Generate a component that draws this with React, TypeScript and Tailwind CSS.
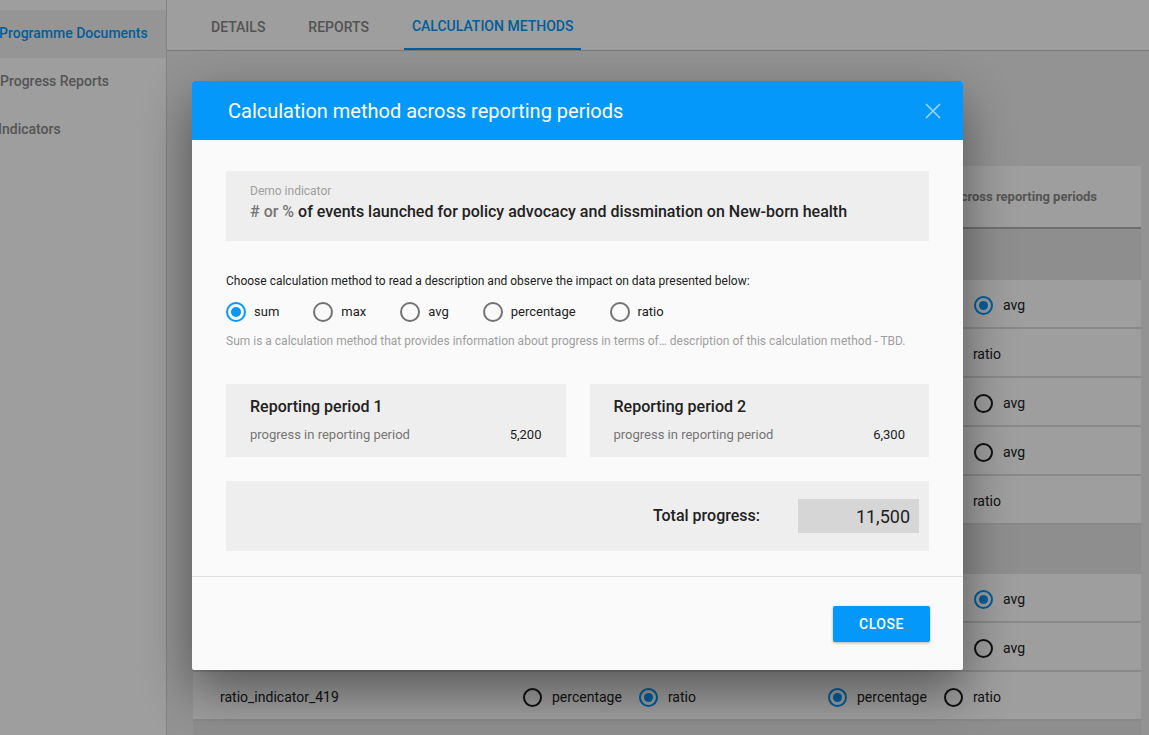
import { useState } from 'react';

const methods = ['sum', 'max', 'avg', 'percentage', 'ratio'];

type Opt = { label: string; checked?: boolean };

function TableRadio({ checked }: { checked?: boolean }) {
  return checked ? (
    <span className="w-[19px] h-[19px] rounded-full border-2 border-[#0398fa] flex items-center justify-center shrink-0">
      <span className="w-[9px] h-[9px] rounded-full bg-[#0398fa]" />
    </span>
  ) : (
    <span className="w-[19px] h-[19px] rounded-full border-[2.5px] border-[#1c1c1c] shrink-0" />
  );
}

function Options({ items }: { items: Opt[] }) {
  return (
    <div className="flex items-center">
      {items.map((o) => (
        <div key={o.label} className="flex items-center mr-[17px]">
          <TableRadio checked={o.checked} />
          <span className="ml-[10px] text-[14px] text-[#212121]">{o.label}</span>
        </div>
      ))}
    </div>
  );
}

const sma = (c?: string): Opt[] => [
  { label: 'sum', checked: c === 'sum' },
  { label: 'max', checked: c === 'max' },
  { label: 'avg', checked: c === 'avg' },
];
const pr = (c?: string): Opt[] => [
  { label: 'percentage', checked: c === 'percentage' },
  { label: 'ratio', checked: c === 'ratio' },
];

const groupA = [
  { name: 'quantity_indicator_652', a: sma('sum'), b: sma('avg') },
  { name: 'ratio_indicator_417', a: pr('percentage'), b: pr('ratio') },
  { name: 'quantity_indicator_653', a: sma('sum'), b: sma() },
  { name: 'quantity_indicator_654', a: sma('max'), b: sma() },
  { name: 'ratio_indicator_418', a: pr('ratio'), b: pr('percentage') },
];
const groupB = [
  { name: 'quantity_indicator_655', a: sma('sum'), b: sma('avg') },
  { name: 'quantity_indicator_656', a: sma('max'), b: sma() },
  { name: 'ratio_indicator_419', a: pr('ratio'), b: pr('percentage') },
];

function Row({ r, first }: { r: { name: string; a: Opt[]; b: Opt[] }; first?: boolean }) {
  return (
    <div
      className={`h-[49px] flex items-center pt-[4px] bg-white border-t-2 ${
        first ? 'border-[#e6e6e6]' : 'border-[#dedede]'
      }`}
    >
      <div className="w-[330px] pl-[27px] text-[14px] text-[#212121]">{r.name}</div>
      <div className="w-[305px]">
        <Options items={r.a} />
      </div>
      <div className="flex-1">
        <Options items={r.b} />
      </div>
    </div>
  );
}

function ModalRadio({ checked }: { checked: boolean }) {
  return checked ? (
    <span className="w-5 h-5 rounded-full border-2 border-[#0398fa] flex items-center justify-center shrink-0">
      <span className="w-[10px] h-[10px] rounded-full bg-[#0398fa]" />
    </span>
  ) : (
    <span className="w-5 h-5 rounded-full border-2 border-[#737373] shrink-0" />
  );
}

function PeriodCard({ title, value }: { title: string; value: string }) {
  return (
    <div className="flex-1 bg-[#eeeeee] pl-6 pr-6 pt-[11px] pb-[13px]">
      <div className="text-[16px] leading-6 font-medium text-[#212121]">{title}</div>
      <div className="flex justify-between items-center mt-[7px] text-[13px] leading-[18px]">
        <span className="text-[#757575]">progress in reporting period</span>
        <span className="text-[#212121]">{value}</span>
      </div>
    </div>
  );
}

export default function App() {
  const [method, setMethod] = useState('sum');

  return (
    <div className="relative h-[735px] overflow-hidden flex bg-white [font-family:Roboto,sans-serif]">
      {/* sidebar */}
      <aside className="w-[167px] shrink-0 border-r border-[#d4d4d4] bg-white pt-[10px]">
        <div className="h-12 flex items-center pb-[2px] bg-[#f0f0f0] text-[14px] font-medium text-[#0398fa] -ml-[1px]">
          Programme Documents
        </div>
        <div className="h-12 flex items-center pb-[2px] text-[14px] font-medium text-[#8a8a8a]">Progress Reports</div>
        <div className="h-12 flex items-center pb-[2px] text-[14px] font-medium text-[#8a8a8a] -ml-[2px]">Indicators</div>
      </aside>

      {/* main */}
      <main className="flex-1 flex flex-col bg-[#eeeeee]">
        <div className="h-[51px] shrink-0 bg-white border-b border-[#c4c4c4] flex items-end pl-[36px] gap-[27px]">
          <div className="px-2 h-[50px] flex items-center pt-[4px] text-[14px] font-medium text-[#878787]">DETAILS</div>
          <div className="px-2 h-[50px] flex items-center pt-[4px] text-[14px] font-medium text-[#878787]">REPORTS</div>
          <div className="px-2 h-[50px] flex items-center pt-[4px] text-[14px] font-medium text-[#0398fa] border-b-2 border-[#0398fa]">
            CALCULATION METHODS
          </div>
        </div>

        <div className="pl-[26px] pr-[8px] pt-[115px]">
          <div className="bg-white">
            <div className="h-[63px] flex items-center border-b-2 border-[#b4b4b4] text-[13px] font-bold text-[#8a8a8a]">
              <div className="w-[330px] pl-[27px]">Indicator</div>
              <div className="w-[305px]">Calculation method across locations</div>
              <div className="flex-1 flex justify-end pr-[44px]">Calculation method across reporting periods</div>
            </div>
            <div className="h-[49px] bg-[#e6e6e6]" />
            {groupA.map((r, i) => (
              <Row key={r.name} r={r} first={i === 0} />
            ))}
            <div className="h-[49px] bg-[#e6e6e6] border-t-2 border-[#dedede]" />
            {groupB.map((r, i) => (
              <Row key={r.name} r={r} first={i === 0} />
            ))}
            <div className="h-[49px] bg-[#e6e6e6] border-t-2 border-[#dedede]" />
          </div>
        </div>
      </main>

      {/* overlay + modal */}
      <div className="absolute inset-0 bg-black/[0.38]">
        <div className="absolute left-[192px] top-[81px] w-[771px] bg-[#fafafa] rounded-[2px] shadow-[0_20px_50px_rgba(0,0,0,0.45)] overflow-hidden">
          <div className="h-[59px] bg-[#0398fa] flex items-center justify-between pl-9 pr-[19px]">
            <h2 className="text-[20px] text-white">Calculation method across reporting periods</h2>
            <svg width="22" height="22" viewBox="0 0 22 22" className="opacity-60">
              <path d="M4 4 L18 18 M18 4 L4 18" stroke="white" strokeWidth="1.6" fill="none" />
            </svg>
          </div>

          <div className="px-[34px] pt-[31px] pb-[25px]">
            <div className="h-[70px] bg-[#eeeeee] pl-6 pt-[12px]">
              <div className="text-[12px] leading-4 text-[#9e9e9e]">Demo indicator</div>
              <div className="text-[16px] leading-6 font-medium mt-[1px]">
                <span className="text-[#757575]"># or % </span>
                <span className="text-[#212121]">of events launched for policy advocacy and dissmination on New-born health</span>
              </div>
            </div>

            <p className="mt-[32px] text-[12px] leading-4 text-[#212121]">
              Choose calculation method to read a description and observe the impact on data presented below:
            </p>
            <div className="flex items-center mt-[13px]">
              {methods.map((m) => (
                <button key={m} onClick={() => setMethod(m)} className="flex items-center mr-[34px]">
                  <ModalRadio checked={method === m} />
                  <span className="ml-2 text-[13px] text-[#212121]">{m}</span>
                </button>
              ))}
            </div>
            <p className="mt-[11px] text-[12px] leading-4 text-[#9e9e9e]">
              Sum is a calculation method that provides information about progress in terms of… description of this
              calculation method - TBD.
            </p>

            <div className="flex gap-6 mt-[35px]">
              <PeriodCard title="Reporting period 1" value="5,200" />
              <PeriodCard title="Reporting period 2" value="6,300" />
            </div>

            <div className="h-[70px] mt-6 bg-[#eeeeee] flex items-center justify-end pr-[10px]">
              <span className="text-[16px] font-medium text-[#212121]">Total progress:</span>
              <div className="ml-[38px] w-[121px] h-[34px] bg-[#d6d6d6] flex items-center justify-end pr-[9px] text-[18px] text-[#212121]">
                11,500
              </div>
            </div>
          </div>

          <div className="border-t border-[#e0e0e0] flex justify-end pt-[29px] pb-[28px] pr-[33px]">
            <button className="w-[97px] h-[36px] bg-[#0398fa] text-white text-[14px] font-medium tracking-[0.5px] rounded-[2px] shadow-[0_1px_3px_rgba(0,0,0,0.3)]">
              CLOSE
            </button>
          </div>
        </div>
      </div>
    </div>
  );
}
